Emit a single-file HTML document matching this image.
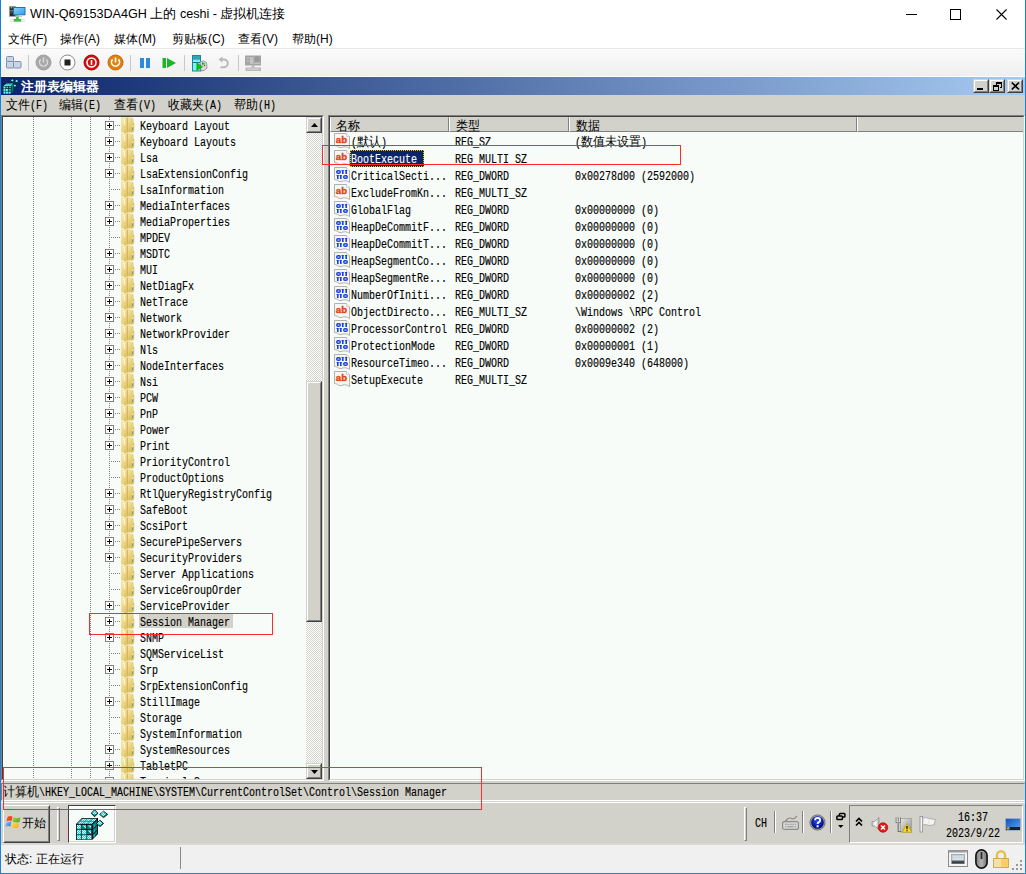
<!DOCTYPE html><html><head><meta charset="utf-8"><style>
*{margin:0;padding:0;box-sizing:border-box}
html,body{width:1026px;height:874px;overflow:hidden;background:#fff;font-family:"Liberation Sans",sans-serif;font-size:12px;color:#000}
.a{position:absolute}
.m{position:absolute;font-family:"Liberation Mono",monospace;font-size:12px;letter-spacing:0;transform:scaleX(0.8333);transform-origin:0 0;white-space:pre;line-height:16px;-webkit-text-stroke:0.15px currentColor}
.u{position:absolute;white-space:pre;line-height:16px}
.c{position:absolute;white-space:pre;line-height:16px;font-size:13px;transform:scaleX(0.923);transform-origin:0 0}
svg{position:absolute;overflow:visible}
.dv{position:absolute;width:1px;background-image:linear-gradient(#808080 50%,transparent 50%);background-size:1px 2px}
.dh{position:absolute;height:1px;background-image:linear-gradient(90deg,#808080 50%,transparent 50%);background-size:2px 1px}
.rb{position:absolute;border:1px solid;border-color:#d3d2ca #404040 #404040 #d3d2ca;background:#d3d2ca}
.rb>i{position:absolute;left:0;top:0;right:0;bottom:0;border:1px solid;border-color:#fff #808080 #808080 #fff}
.red{position:absolute;border:2px solid #ff2a2a}
</style></head><body>
<div class="a" style="left:0;top:0;width:1026px;height:48px;background:#fff"></div>
<div class="a" style="left:1px;top:48px;width:1024px;height:1px;background:#e8e8e8"></div>
<div class="a" style="left:1px;top:49px;width:1024px;height:27px;background:linear-gradient(#fbfbfb,#efefef)"></div>
<div class="a" style="left:1px;top:76px;width:1024px;height:1px;background:#fff"></div>
<svg style="left:6px;top:4px" width="22" height="22" viewBox="0 0 22 22">
<defs><linearGradient id="vm" x1="0" y1="0" x2="1" y2="1"><stop offset="0" stop-color="#90d0fa"/><stop offset="1" stop-color="#28a0f0"/></linearGradient></defs>
<rect x="3.3" y="2.3" width="6.4" height="10.2" fill="#2a2a2a" stroke="#b0b0b0" stroke-width="0.7"/><rect x="4.2" y="6.2" width="3" height="1" fill="#888"/><rect x="4.2" y="7.8" width="3" height="0.8" fill="#666"/>
<circle cx="5.5" cy="3.6" r="0.9" fill="#3e3"/>
<rect x="7.5" y="3.5" width="11.5" height="7.3" fill="url(#vm)" stroke="#2a6ea8" stroke-width="1"/>
<rect x="10" y="10.8" width="2.5" height="1.2" fill="#55cc55"/><rect x="9.5" y="12" width="6.5" height="0.7" fill="#a8b0c8"/>
<rect x="4" y="15" width="15" height="0.9" fill="#dcdcdc"/><rect x="4" y="16.8" width="15" height="0.9" fill="#dcdcdc"/>
<rect x="10" y="12.8" width="2.8" height="2.4" fill="#40c040"/><rect x="7.8" y="15" width="7.3" height="2.6" fill="#38c038"/>
</svg>
<div class="u" style="left:30px;top:6px;font-size:12.6px;line-height:16px;color:#000">WIN-Q69153DA4GH 上的 ceshi - 虚拟机连接</div>
<div class="a" style="left:906px;top:14px;width:11px;height:1px;background:#000"></div>
<div class="a" style="left:950px;top:9px;width:11px;height:11px;border:1px solid #000"></div>
<svg style="left:996px;top:9px" width="11" height="11" viewBox="0 0 11 11"><path d="M0.5 0.5L10.5 10.5M10.5 0.5L0.5 10.5" stroke="#000" stroke-width="1.1"/></svg>
<div class="u" style="left:8px;top:31px;font-size:12px">文件(F)</div>
<div class="u" style="left:60px;top:31px;font-size:12px">操作(A)</div>
<div class="u" style="left:114px;top:31px;font-size:12px">媒体(M)</div>
<div class="u" style="left:172px;top:31px;font-size:12px">剪贴板(C)</div>
<div class="u" style="left:238px;top:31px;font-size:12px">查看(V)</div>
<div class="u" style="left:292px;top:31px;font-size:12px">帮助(H)</div>
<svg style="left:6px;top:56px" width="16" height="13" viewBox="0 0 16 13">
<rect x="0.5" y="0.5" width="7" height="6" rx="1" fill="#c8d4e8" stroke="#8090a8"/>
<rect x="0.5" y="5.5" width="7" height="6.5" rx="1" fill="#c8d4e8" stroke="#8090a8"/>
<rect x="7.5" y="5.5" width="7.5" height="6.5" rx="1" fill="#c8d4e8" stroke="#8090a8"/></svg>
<div class="a" style="left:28px;top:55px;width:1px;height:16px;background:#c8c8c8"></div>
<div class="a" style="left:130px;top:55px;width:1px;height:16px;background:#c8c8c8"></div>
<div class="a" style="left:184px;top:55px;width:1px;height:16px;background:#c8c8c8"></div>
<div class="a" style="left:238px;top:55px;width:1px;height:16px;background:#c8c8c8"></div>
<svg style="left:34.5px;top:54px" width="17" height="17" viewBox="0 0 17 17">
<circle cx="8.5" cy="8.5" r="7.5" fill="#a8a8a8" stroke="#a0a0a0" stroke-width="1"/><path d="M5.6 5.4A4 4 0 1 0 11.4 5.4" fill="none" stroke="#ddd" stroke-width="1.4"/><path d="M8.5 3.5V8.5" stroke="#ddd" stroke-width="1.4"/></svg>
<svg style="left:59px;top:54px" width="17" height="17" viewBox="0 0 17 17">
<circle cx="8.5" cy="8.5" r="7.5" fill="#fff" stroke="#888" stroke-width="1"/><rect x="5.5" y="5.5" width="6" height="6" fill="#222"/></svg>
<svg style="left:82.5px;top:54px" width="17" height="17" viewBox="0 0 17 17">
<circle cx="8.5" cy="8.5" r="7.5" fill="#d40f0f" stroke="#a00" stroke-width="1"/><circle cx="8.5" cy="8.5" r="4.5" fill="none" stroke="#fff" stroke-width="1.6"/><path d="M8.5 6V11" stroke="#fff" stroke-width="1.6"/></svg>
<svg style="left:106.5px;top:54px" width="17" height="17" viewBox="0 0 17 17">
<circle cx="8.5" cy="8.5" r="7.5" fill="#e0810e" stroke="#c06a00" stroke-width="1"/><path d="M5.6 5.4A4 4 0 1 0 11.4 5.4" fill="none" stroke="#fff" stroke-width="1.6"/><path d="M8.5 3.5V8.5" stroke="#fff" stroke-width="1.6"/></svg>
<div class="a" style="left:140px;top:58px;width:4px;height:10px;background:#2a8be0"></div><div class="a" style="left:146px;top:58px;width:4px;height:10px;background:#2a8be0"></div>
<svg style="left:162px;top:57px" width="15" height="12" viewBox="0 0 15 12"><rect x="0.5" y="1" width="3.5" height="10" fill="#1cb52a"/><path d="M5 1L14 6L5 11Z" fill="#1cb52a"/></svg>
<svg style="left:192px;top:55px" width="16" height="17" viewBox="0 0 16 17">
<rect x="0.5" y="0.5" width="8" height="15.5" fill="#80eef8" stroke="#1a8898" stroke-width="1"/>
<rect x="1" y="1" width="7" height="2.5" fill="#28a8b8"/><rect x="1" y="3.5" width="7" height="1" fill="#1a7888"/><rect x="1" y="7" width="7" height="1" fill="#1a7888"/>
<path d="M8 7Q11 4.5 14.5 7.5L15 13Q13 16 9 16Z" fill="#d8d8e0" stroke="#888" stroke-width="0.8"/>
<path d="M10 7L13.5 9L10 10Z" fill="#20b020"/><circle cx="12.5" cy="10.5" r="0.7" fill="#d02020"/>
<path d="M4.8 8L10.5 11.8L4.8 15.5Z" fill="#10c010" stroke="#088808" stroke-width="0.5"/>
</svg>
<svg style="left:218px;top:56px" width="11" height="14" viewBox="0 0 11 14"><path d="M3 3.5H6A3.8 3.8 0 0 1 6 11.2H2.5" fill="none" stroke="#b8b8b8" stroke-width="2"/><path d="M0.5 3.5L4.5 0.5V6.5Z" fill="#b8b8b8"/></svg>
<svg style="left:245px;top:55px" width="16" height="16" viewBox="0 0 16 16">
<rect x="0" y="0.5" width="16" height="10" fill="#a4a4a4"/><rect x="1.5" y="2" width="3" height="2" fill="#b8b8b8"/><rect x="1.5" y="5" width="3" height="2" fill="#b8b8b8"/>
<rect x="5" y="2" width="3.5" height="7" fill="#c4c4c4"/><path d="M10 2H11.5V1H13V2H14.5V7H10Z" fill="#999"/><rect x="9.5" y="7.5" width="5.5" height="1.5" fill="#c0c0c0"/>
<rect x="6.5" y="10.5" width="3" height="2" fill="#b4b4b4"/><rect x="0.5" y="12.5" width="15.5" height="3.5" fill="#b8b8b8"/><rect x="2" y="13.5" width="12" height="1.5" fill="#cfcfcf"/>
</svg>
<div class="a" style="left:1px;top:77px;width:1024px;height:768px;background:#d3d2ca"></div>
<div class="a" style="left:1px;top:77px;width:1024px;height:18px;background:linear-gradient(90deg,#0a246a,#a6caf0)"></div>
<svg style="left:3px;top:78px" width="16" height="16" viewBox="0 0 32 32"><use href="#reg"/></svg>
<div class="u" style="left:21px;top:78px;color:#fff;font-weight:bold;font-size:13px;line-height:17px">注册表编辑器</div>
<div class="rb" style="left:973px;top:79px;width:16px;height:14px"><i></i><div class="a" style="left:3px;top:8px;width:6px;height:2px;background:#000"></div></div>
<div class="rb" style="left:989px;top:79px;width:16px;height:14px"><i></i><svg style="left:1px;top:1px" width="12" height="12" viewBox="0 0 12 12"><g fill="#000"><rect x="5" y="1" width="6" height="2"/><rect x="10" y="1" width="1" height="6"/><rect x="5" y="1" width="1" height="3"/><rect x="9" y="6" width="2" height="1"/><rect x="2" y="4" width="6" height="2"/><rect x="2" y="4" width="1" height="6"/><rect x="7" y="4" width="1" height="6"/><rect x="2" y="9" width="6" height="1"/></g></svg></div>
<div class="rb" style="left:1007px;top:79px;width:16px;height:14px"><i></i><svg style="left:3px;top:2px" width="9" height="8" viewBox="0 0 9 8"><path d="M0.8 0.5L8 7.5M8 0.5L0.8 7.5" stroke="#000" stroke-width="1.7"/></svg></div>
<div class="c" style="left:6px;top:97px;">文件</div><div class="m" style="left:30px;top:98px;">(F)</div>
<div class="c" style="left:59px;top:97px;">编辑</div><div class="m" style="left:83px;top:98px;">(E)</div>
<div class="c" style="left:114px;top:97px;">查看</div><div class="m" style="left:138px;top:98px;">(V)</div>
<div class="c" style="left:168px;top:97px;">收藏夹</div><div class="m" style="left:204px;top:98px;">(A)</div>
<div class="c" style="left:234px;top:97px;">帮助</div><div class="m" style="left:258px;top:98px;">(H)</div>
<div class="a" style="left:1px;top:115px;width:323px;height:666px;border:1px solid;border-color:#808080 #fff #fff #808080"></div>
<div class="a" style="left:2px;top:116px;width:321px;height:664px;border:1px solid;border-color:#404040 #d3d2ca #d3d2ca #404040;background:#f8fcf8;box-shadow:inset 1px 1px 0 #fff"></div>
<div class="a" style="left:4px;top:117px;width:302px;height:662px;overflow:hidden">
<div class="dv" style="left:29px;top:0;height:662px"></div>
<div class="dv" style="left:67px;top:0;height:662px"></div>
<div class="dv" style="left:86px;top:0;height:662px"></div>
<div class="dv" style="left:105px;top:0;height:662px"></div>
<div class="dh" style="left:107px;top:8px;width:9px"></div>
<div class="a" style="left:101px;top:4px;width:9px;height:9px;border:1px solid #808080;background:#fff"></div>
<div class="a" style="left:103px;top:8px;width:5px;height:1px;background:#000"></div>
<div class="a" style="left:105px;top:6px;width:1px;height:5px;background:#000"></div>
<svg style="left:116px;top:0px" width="16" height="16"><use href="#fold"/></svg>
<div class="m" style="left:136px;top:2px">Keyboard Layout</div>
<div class="dh" style="left:107px;top:24px;width:9px"></div>
<div class="a" style="left:101px;top:20px;width:9px;height:9px;border:1px solid #808080;background:#fff"></div>
<div class="a" style="left:103px;top:24px;width:5px;height:1px;background:#000"></div>
<div class="a" style="left:105px;top:22px;width:1px;height:5px;background:#000"></div>
<svg style="left:116px;top:16px" width="16" height="16"><use href="#fold"/></svg>
<div class="m" style="left:136px;top:18px">Keyboard Layouts</div>
<div class="dh" style="left:107px;top:40px;width:9px"></div>
<div class="a" style="left:101px;top:36px;width:9px;height:9px;border:1px solid #808080;background:#fff"></div>
<div class="a" style="left:103px;top:40px;width:5px;height:1px;background:#000"></div>
<div class="a" style="left:105px;top:38px;width:1px;height:5px;background:#000"></div>
<svg style="left:116px;top:32px" width="16" height="16"><use href="#fold"/></svg>
<div class="m" style="left:136px;top:34px">Lsa</div>
<div class="dh" style="left:107px;top:56px;width:9px"></div>
<div class="a" style="left:101px;top:52px;width:9px;height:9px;border:1px solid #808080;background:#fff"></div>
<div class="a" style="left:103px;top:56px;width:5px;height:1px;background:#000"></div>
<div class="a" style="left:105px;top:54px;width:1px;height:5px;background:#000"></div>
<svg style="left:116px;top:48px" width="16" height="16"><use href="#fold"/></svg>
<div class="m" style="left:136px;top:50px">LsaExtensionConfig</div>
<div class="dh" style="left:107px;top:72px;width:9px"></div>
<svg style="left:116px;top:64px" width="16" height="16"><use href="#fold"/></svg>
<div class="m" style="left:136px;top:66px">LsaInformation</div>
<div class="dh" style="left:107px;top:88px;width:9px"></div>
<div class="a" style="left:101px;top:84px;width:9px;height:9px;border:1px solid #808080;background:#fff"></div>
<div class="a" style="left:103px;top:88px;width:5px;height:1px;background:#000"></div>
<div class="a" style="left:105px;top:86px;width:1px;height:5px;background:#000"></div>
<svg style="left:116px;top:80px" width="16" height="16"><use href="#fold"/></svg>
<div class="m" style="left:136px;top:82px">MediaInterfaces</div>
<div class="dh" style="left:107px;top:104px;width:9px"></div>
<div class="a" style="left:101px;top:100px;width:9px;height:9px;border:1px solid #808080;background:#fff"></div>
<div class="a" style="left:103px;top:104px;width:5px;height:1px;background:#000"></div>
<div class="a" style="left:105px;top:102px;width:1px;height:5px;background:#000"></div>
<svg style="left:116px;top:96px" width="16" height="16"><use href="#fold"/></svg>
<div class="m" style="left:136px;top:98px">MediaProperties</div>
<div class="dh" style="left:107px;top:120px;width:9px"></div>
<svg style="left:116px;top:112px" width="16" height="16"><use href="#fold"/></svg>
<div class="m" style="left:136px;top:114px">MPDEV</div>
<div class="dh" style="left:107px;top:136px;width:9px"></div>
<div class="a" style="left:101px;top:132px;width:9px;height:9px;border:1px solid #808080;background:#fff"></div>
<div class="a" style="left:103px;top:136px;width:5px;height:1px;background:#000"></div>
<div class="a" style="left:105px;top:134px;width:1px;height:5px;background:#000"></div>
<svg style="left:116px;top:128px" width="16" height="16"><use href="#fold"/></svg>
<div class="m" style="left:136px;top:130px">MSDTC</div>
<div class="dh" style="left:107px;top:152px;width:9px"></div>
<div class="a" style="left:101px;top:148px;width:9px;height:9px;border:1px solid #808080;background:#fff"></div>
<div class="a" style="left:103px;top:152px;width:5px;height:1px;background:#000"></div>
<div class="a" style="left:105px;top:150px;width:1px;height:5px;background:#000"></div>
<svg style="left:116px;top:144px" width="16" height="16"><use href="#fold"/></svg>
<div class="m" style="left:136px;top:146px">MUI</div>
<div class="dh" style="left:107px;top:168px;width:9px"></div>
<div class="a" style="left:101px;top:164px;width:9px;height:9px;border:1px solid #808080;background:#fff"></div>
<div class="a" style="left:103px;top:168px;width:5px;height:1px;background:#000"></div>
<div class="a" style="left:105px;top:166px;width:1px;height:5px;background:#000"></div>
<svg style="left:116px;top:160px" width="16" height="16"><use href="#fold"/></svg>
<div class="m" style="left:136px;top:162px">NetDiagFx</div>
<div class="dh" style="left:107px;top:184px;width:9px"></div>
<div class="a" style="left:101px;top:180px;width:9px;height:9px;border:1px solid #808080;background:#fff"></div>
<div class="a" style="left:103px;top:184px;width:5px;height:1px;background:#000"></div>
<div class="a" style="left:105px;top:182px;width:1px;height:5px;background:#000"></div>
<svg style="left:116px;top:176px" width="16" height="16"><use href="#fold"/></svg>
<div class="m" style="left:136px;top:178px">NetTrace</div>
<div class="dh" style="left:107px;top:200px;width:9px"></div>
<div class="a" style="left:101px;top:196px;width:9px;height:9px;border:1px solid #808080;background:#fff"></div>
<div class="a" style="left:103px;top:200px;width:5px;height:1px;background:#000"></div>
<div class="a" style="left:105px;top:198px;width:1px;height:5px;background:#000"></div>
<svg style="left:116px;top:192px" width="16" height="16"><use href="#fold"/></svg>
<div class="m" style="left:136px;top:194px">Network</div>
<div class="dh" style="left:107px;top:216px;width:9px"></div>
<div class="a" style="left:101px;top:212px;width:9px;height:9px;border:1px solid #808080;background:#fff"></div>
<div class="a" style="left:103px;top:216px;width:5px;height:1px;background:#000"></div>
<div class="a" style="left:105px;top:214px;width:1px;height:5px;background:#000"></div>
<svg style="left:116px;top:208px" width="16" height="16"><use href="#fold"/></svg>
<div class="m" style="left:136px;top:210px">NetworkProvider</div>
<div class="dh" style="left:107px;top:232px;width:9px"></div>
<div class="a" style="left:101px;top:228px;width:9px;height:9px;border:1px solid #808080;background:#fff"></div>
<div class="a" style="left:103px;top:232px;width:5px;height:1px;background:#000"></div>
<div class="a" style="left:105px;top:230px;width:1px;height:5px;background:#000"></div>
<svg style="left:116px;top:224px" width="16" height="16"><use href="#fold"/></svg>
<div class="m" style="left:136px;top:226px">Nls</div>
<div class="dh" style="left:107px;top:248px;width:9px"></div>
<div class="a" style="left:101px;top:244px;width:9px;height:9px;border:1px solid #808080;background:#fff"></div>
<div class="a" style="left:103px;top:248px;width:5px;height:1px;background:#000"></div>
<div class="a" style="left:105px;top:246px;width:1px;height:5px;background:#000"></div>
<svg style="left:116px;top:240px" width="16" height="16"><use href="#fold"/></svg>
<div class="m" style="left:136px;top:242px">NodeInterfaces</div>
<div class="dh" style="left:107px;top:264px;width:9px"></div>
<div class="a" style="left:101px;top:260px;width:9px;height:9px;border:1px solid #808080;background:#fff"></div>
<div class="a" style="left:103px;top:264px;width:5px;height:1px;background:#000"></div>
<div class="a" style="left:105px;top:262px;width:1px;height:5px;background:#000"></div>
<svg style="left:116px;top:256px" width="16" height="16"><use href="#fold"/></svg>
<div class="m" style="left:136px;top:258px">Nsi</div>
<div class="dh" style="left:107px;top:280px;width:9px"></div>
<div class="a" style="left:101px;top:276px;width:9px;height:9px;border:1px solid #808080;background:#fff"></div>
<div class="a" style="left:103px;top:280px;width:5px;height:1px;background:#000"></div>
<div class="a" style="left:105px;top:278px;width:1px;height:5px;background:#000"></div>
<svg style="left:116px;top:272px" width="16" height="16"><use href="#fold"/></svg>
<div class="m" style="left:136px;top:274px">PCW</div>
<div class="dh" style="left:107px;top:296px;width:9px"></div>
<div class="a" style="left:101px;top:292px;width:9px;height:9px;border:1px solid #808080;background:#fff"></div>
<div class="a" style="left:103px;top:296px;width:5px;height:1px;background:#000"></div>
<div class="a" style="left:105px;top:294px;width:1px;height:5px;background:#000"></div>
<svg style="left:116px;top:288px" width="16" height="16"><use href="#fold"/></svg>
<div class="m" style="left:136px;top:290px">PnP</div>
<div class="dh" style="left:107px;top:312px;width:9px"></div>
<div class="a" style="left:101px;top:308px;width:9px;height:9px;border:1px solid #808080;background:#fff"></div>
<div class="a" style="left:103px;top:312px;width:5px;height:1px;background:#000"></div>
<div class="a" style="left:105px;top:310px;width:1px;height:5px;background:#000"></div>
<svg style="left:116px;top:304px" width="16" height="16"><use href="#fold"/></svg>
<div class="m" style="left:136px;top:306px">Power</div>
<div class="dh" style="left:107px;top:328px;width:9px"></div>
<div class="a" style="left:101px;top:324px;width:9px;height:9px;border:1px solid #808080;background:#fff"></div>
<div class="a" style="left:103px;top:328px;width:5px;height:1px;background:#000"></div>
<div class="a" style="left:105px;top:326px;width:1px;height:5px;background:#000"></div>
<svg style="left:116px;top:320px" width="16" height="16"><use href="#fold"/></svg>
<div class="m" style="left:136px;top:322px">Print</div>
<div class="dh" style="left:107px;top:344px;width:9px"></div>
<svg style="left:116px;top:336px" width="16" height="16"><use href="#fold"/></svg>
<div class="m" style="left:136px;top:338px">PriorityControl</div>
<div class="dh" style="left:107px;top:360px;width:9px"></div>
<svg style="left:116px;top:352px" width="16" height="16"><use href="#fold"/></svg>
<div class="m" style="left:136px;top:354px">ProductOptions</div>
<div class="dh" style="left:107px;top:376px;width:9px"></div>
<div class="a" style="left:101px;top:372px;width:9px;height:9px;border:1px solid #808080;background:#fff"></div>
<div class="a" style="left:103px;top:376px;width:5px;height:1px;background:#000"></div>
<div class="a" style="left:105px;top:374px;width:1px;height:5px;background:#000"></div>
<svg style="left:116px;top:368px" width="16" height="16"><use href="#fold"/></svg>
<div class="m" style="left:136px;top:370px">RtlQueryRegistryConfig</div>
<div class="dh" style="left:107px;top:392px;width:9px"></div>
<div class="a" style="left:101px;top:388px;width:9px;height:9px;border:1px solid #808080;background:#fff"></div>
<div class="a" style="left:103px;top:392px;width:5px;height:1px;background:#000"></div>
<div class="a" style="left:105px;top:390px;width:1px;height:5px;background:#000"></div>
<svg style="left:116px;top:384px" width="16" height="16"><use href="#fold"/></svg>
<div class="m" style="left:136px;top:386px">SafeBoot</div>
<div class="dh" style="left:107px;top:408px;width:9px"></div>
<div class="a" style="left:101px;top:404px;width:9px;height:9px;border:1px solid #808080;background:#fff"></div>
<div class="a" style="left:103px;top:408px;width:5px;height:1px;background:#000"></div>
<div class="a" style="left:105px;top:406px;width:1px;height:5px;background:#000"></div>
<svg style="left:116px;top:400px" width="16" height="16"><use href="#fold"/></svg>
<div class="m" style="left:136px;top:402px">ScsiPort</div>
<div class="dh" style="left:107px;top:424px;width:9px"></div>
<div class="a" style="left:101px;top:420px;width:9px;height:9px;border:1px solid #808080;background:#fff"></div>
<div class="a" style="left:103px;top:424px;width:5px;height:1px;background:#000"></div>
<div class="a" style="left:105px;top:422px;width:1px;height:5px;background:#000"></div>
<svg style="left:116px;top:416px" width="16" height="16"><use href="#fold"/></svg>
<div class="m" style="left:136px;top:418px">SecurePipeServers</div>
<div class="dh" style="left:107px;top:440px;width:9px"></div>
<div class="a" style="left:101px;top:436px;width:9px;height:9px;border:1px solid #808080;background:#fff"></div>
<div class="a" style="left:103px;top:440px;width:5px;height:1px;background:#000"></div>
<div class="a" style="left:105px;top:438px;width:1px;height:5px;background:#000"></div>
<svg style="left:116px;top:432px" width="16" height="16"><use href="#fold"/></svg>
<div class="m" style="left:136px;top:434px">SecurityProviders</div>
<div class="dh" style="left:107px;top:456px;width:9px"></div>
<svg style="left:116px;top:448px" width="16" height="16"><use href="#fold"/></svg>
<div class="m" style="left:136px;top:450px">Server Applications</div>
<div class="dh" style="left:107px;top:472px;width:9px"></div>
<svg style="left:116px;top:464px" width="16" height="16"><use href="#fold"/></svg>
<div class="m" style="left:136px;top:466px">ServiceGroupOrder</div>
<div class="dh" style="left:107px;top:488px;width:9px"></div>
<div class="a" style="left:101px;top:484px;width:9px;height:9px;border:1px solid #808080;background:#fff"></div>
<div class="a" style="left:103px;top:488px;width:5px;height:1px;background:#000"></div>
<div class="a" style="left:105px;top:486px;width:1px;height:5px;background:#000"></div>
<svg style="left:116px;top:480px" width="16" height="16"><use href="#fold"/></svg>
<div class="m" style="left:136px;top:482px">ServiceProvider</div>
<div class="dh" style="left:107px;top:504px;width:9px"></div>
<div class="a" style="left:101px;top:500px;width:9px;height:9px;border:1px solid #808080;background:#fff"></div>
<div class="a" style="left:103px;top:504px;width:5px;height:1px;background:#000"></div>
<div class="a" style="left:105px;top:502px;width:1px;height:5px;background:#000"></div>
<svg style="left:116px;top:496px" width="16" height="16"><use href="#fold"/></svg>
<div class="a" style="left:135px;top:497px;width:94px;height:14px;background:#d3d2ca"></div>
<div class="m" style="left:136px;top:498px">Session Manager</div>
<div class="dh" style="left:107px;top:520px;width:9px"></div>
<div class="a" style="left:101px;top:516px;width:9px;height:9px;border:1px solid #808080;background:#fff"></div>
<div class="a" style="left:103px;top:520px;width:5px;height:1px;background:#000"></div>
<div class="a" style="left:105px;top:518px;width:1px;height:5px;background:#000"></div>
<svg style="left:116px;top:512px" width="16" height="16"><use href="#fold"/></svg>
<div class="m" style="left:136px;top:514px">SNMP</div>
<div class="dh" style="left:107px;top:536px;width:9px"></div>
<svg style="left:116px;top:528px" width="16" height="16"><use href="#fold"/></svg>
<div class="m" style="left:136px;top:530px">SQMServiceList</div>
<div class="dh" style="left:107px;top:552px;width:9px"></div>
<div class="a" style="left:101px;top:548px;width:9px;height:9px;border:1px solid #808080;background:#fff"></div>
<div class="a" style="left:103px;top:552px;width:5px;height:1px;background:#000"></div>
<div class="a" style="left:105px;top:550px;width:1px;height:5px;background:#000"></div>
<svg style="left:116px;top:544px" width="16" height="16"><use href="#fold"/></svg>
<div class="m" style="left:136px;top:546px">Srp</div>
<div class="dh" style="left:107px;top:568px;width:9px"></div>
<svg style="left:116px;top:560px" width="16" height="16"><use href="#fold"/></svg>
<div class="m" style="left:136px;top:562px">SrpExtensionConfig</div>
<div class="dh" style="left:107px;top:584px;width:9px"></div>
<div class="a" style="left:101px;top:580px;width:9px;height:9px;border:1px solid #808080;background:#fff"></div>
<div class="a" style="left:103px;top:584px;width:5px;height:1px;background:#000"></div>
<div class="a" style="left:105px;top:582px;width:1px;height:5px;background:#000"></div>
<svg style="left:116px;top:576px" width="16" height="16"><use href="#fold"/></svg>
<div class="m" style="left:136px;top:578px">StillImage</div>
<div class="dh" style="left:107px;top:600px;width:9px"></div>
<svg style="left:116px;top:592px" width="16" height="16"><use href="#fold"/></svg>
<div class="m" style="left:136px;top:594px">Storage</div>
<div class="dh" style="left:107px;top:616px;width:9px"></div>
<svg style="left:116px;top:608px" width="16" height="16"><use href="#fold"/></svg>
<div class="m" style="left:136px;top:610px">SystemInformation</div>
<div class="dh" style="left:107px;top:632px;width:9px"></div>
<div class="a" style="left:101px;top:628px;width:9px;height:9px;border:1px solid #808080;background:#fff"></div>
<div class="a" style="left:103px;top:632px;width:5px;height:1px;background:#000"></div>
<div class="a" style="left:105px;top:630px;width:1px;height:5px;background:#000"></div>
<svg style="left:116px;top:624px" width="16" height="16"><use href="#fold"/></svg>
<div class="m" style="left:136px;top:626px">SystemResources</div>
<div class="dh" style="left:107px;top:648px;width:9px"></div>
<div class="a" style="left:101px;top:644px;width:9px;height:9px;border:1px solid #808080;background:#fff"></div>
<div class="a" style="left:103px;top:648px;width:5px;height:1px;background:#000"></div>
<div class="a" style="left:105px;top:646px;width:1px;height:5px;background:#000"></div>
<svg style="left:116px;top:640px" width="16" height="16"><use href="#fold"/></svg>
<div class="m" style="left:136px;top:642px">TabletPC</div>
<div class="dh" style="left:107px;top:664px;width:9px"></div>
<div class="a" style="left:101px;top:660px;width:9px;height:9px;border:1px solid #808080;background:#fff"></div>
<div class="a" style="left:103px;top:664px;width:5px;height:1px;background:#000"></div>
<div class="a" style="left:105px;top:662px;width:1px;height:5px;background:#000"></div>
<svg style="left:116px;top:656px" width="16" height="16"><use href="#fold"/></svg>
<div class="m" style="left:136px;top:658px">Terminal Server</div>
</div>
<div class="a" style="left:306px;top:117px;width:16px;height:662px;background-color:#eceae6;background-image:repeating-conic-gradient(#d3d2ca 0 25%,#fff 0 50%);background-size:2px 2px"></div>
<div class="rb" style="left:306px;top:117px;width:16px;height:16px"><i></i><svg style="left:4px;top:5px" width="7" height="4"><path d="M3.5 0L7 4H0Z" fill="#000"/></svg></div>
<div class="rb" style="left:306px;top:763px;width:16px;height:16px"><i></i><svg style="left:4px;top:6px" width="7" height="4"><path d="M0 0H7L3.5 4Z" fill="#000"/></svg></div>
<div class="rb" style="left:306px;top:381px;width:16px;height:241px"><i></i></div>
<div class="a" style="left:328px;top:115px;width:697px;height:666px;border:1px solid;border-color:#808080 #fff #fff #808080"></div>
<div class="a" style="left:329px;top:116px;width:695px;height:664px;border:1px solid;border-color:#404040 #d3d2ca #d3d2ca #404040;background:#f8fcf8;box-shadow:inset 1px 1px 0 #fff"></div>
<div class="a" style="left:330px;top:117px;width:119px;height:15px;border:1px solid;border-color:#d3d2ca #808080 #808080 #fff;background:#d3d2ca"></div><div class="c" style="left:336px;top:118px;">名称</div>
<div class="a" style="left:449px;top:117px;width:120px;height:15px;border:1px solid;border-color:#d3d2ca #808080 #808080 #fff;background:#d3d2ca"></div><div class="c" style="left:456px;top:118px;">类型</div>
<div class="a" style="left:569px;top:117px;width:288px;height:15px;border:1px solid;border-color:#d3d2ca #808080 #808080 #fff;background:#d3d2ca"></div><div class="c" style="left:576px;top:118px;">数据</div>
<div class="a" style="left:857px;top:117px;width:166px;height:15px;border-bottom:1px solid #808080;border-left:1px solid #fff;background:#d3d2ca"></div>
<svg style="left:334px;top:132px" width="16" height="17"><use href="#ab"/></svg>
<div class="m" style="left:351px;top:135px;">(</div><div class="c" style="left:357px;top:134px;">默认</div><div class="m" style="left:381px;top:135px;">)</div>
<div class="m" style="left:455px;top:135px">REG_SZ</div>
<div class="m" style="left:575px;top:135px;">(</div><div class="c" style="left:581px;top:134px;">数值未设置</div><div class="m" style="left:641px;top:135px;">)</div>
<svg style="left:334px;top:149px" width="16" height="17"><use href="#ab"/></svg>
<div class="a" style="left:350px;top:150px;width:74px;height:17px;background:#0a246a;outline:1px dotted #e0c040;outline-offset:-1px"></div>
<div class="m" style="left:351px;top:152px;color:#fff">BootExecute</div>
<div class="m" style="left:455px;top:152px">REG_MULTI_SZ</div>
<svg style="left:334px;top:166px" width="16" height="17"><use href="#bin"/></svg>
<div class="m" style="left:351px;top:169px">CriticalSecti...</div>
<div class="m" style="left:455px;top:169px">REG_DWORD</div>
<div class="m" style="left:575px;top:169px">0x00278d00 (2592000)</div>
<svg style="left:334px;top:183px" width="16" height="17"><use href="#ab"/></svg>
<div class="m" style="left:351px;top:186px">ExcludeFromKn...</div>
<div class="m" style="left:455px;top:186px">REG_MULTI_SZ</div>
<svg style="left:334px;top:200px" width="16" height="17"><use href="#bin"/></svg>
<div class="m" style="left:351px;top:203px">GlobalFlag</div>
<div class="m" style="left:455px;top:203px">REG_DWORD</div>
<div class="m" style="left:575px;top:203px">0x00000000 (0)</div>
<svg style="left:334px;top:217px" width="16" height="17"><use href="#bin"/></svg>
<div class="m" style="left:351px;top:220px">HeapDeCommitF...</div>
<div class="m" style="left:455px;top:220px">REG_DWORD</div>
<div class="m" style="left:575px;top:220px">0x00000000 (0)</div>
<svg style="left:334px;top:234px" width="16" height="17"><use href="#bin"/></svg>
<div class="m" style="left:351px;top:237px">HeapDeCommitT...</div>
<div class="m" style="left:455px;top:237px">REG_DWORD</div>
<div class="m" style="left:575px;top:237px">0x00000000 (0)</div>
<svg style="left:334px;top:251px" width="16" height="17"><use href="#bin"/></svg>
<div class="m" style="left:351px;top:254px">HeapSegmentCo...</div>
<div class="m" style="left:455px;top:254px">REG_DWORD</div>
<div class="m" style="left:575px;top:254px">0x00000000 (0)</div>
<svg style="left:334px;top:268px" width="16" height="17"><use href="#bin"/></svg>
<div class="m" style="left:351px;top:271px">HeapSegmentRe...</div>
<div class="m" style="left:455px;top:271px">REG_DWORD</div>
<div class="m" style="left:575px;top:271px">0x00000000 (0)</div>
<svg style="left:334px;top:285px" width="16" height="17"><use href="#bin"/></svg>
<div class="m" style="left:351px;top:288px">NumberOfIniti...</div>
<div class="m" style="left:455px;top:288px">REG_DWORD</div>
<div class="m" style="left:575px;top:288px">0x00000002 (2)</div>
<svg style="left:334px;top:302px" width="16" height="17"><use href="#ab"/></svg>
<div class="m" style="left:351px;top:305px">ObjectDirecto...</div>
<div class="m" style="left:455px;top:305px">REG_MULTI_SZ</div>
<div class="m" style="left:575px;top:305px">\Windows \RPC Control</div>
<svg style="left:334px;top:319px" width="16" height="17"><use href="#bin"/></svg>
<div class="m" style="left:351px;top:322px">ProcessorControl</div>
<div class="m" style="left:455px;top:322px">REG_DWORD</div>
<div class="m" style="left:575px;top:322px">0x00000002 (2)</div>
<svg style="left:334px;top:336px" width="16" height="17"><use href="#bin"/></svg>
<div class="m" style="left:351px;top:339px">ProtectionMode</div>
<div class="m" style="left:455px;top:339px">REG_DWORD</div>
<div class="m" style="left:575px;top:339px">0x00000001 (1)</div>
<svg style="left:334px;top:353px" width="16" height="17"><use href="#bin"/></svg>
<div class="m" style="left:351px;top:356px">ResourceTimeo...</div>
<div class="m" style="left:455px;top:356px">REG_DWORD</div>
<div class="m" style="left:575px;top:356px">0x0009e340 (648000)</div>
<svg style="left:334px;top:370px" width="16" height="17"><use href="#ab"/></svg>
<div class="m" style="left:351px;top:373px">SetupExecute</div>
<div class="m" style="left:455px;top:373px">REG_MULTI_SZ</div>
<div class="a" style="left:1px;top:783px;width:1024px;height:18px;border:1px solid;border-color:#808080 #d3d2ca #fff #808080"></div>
<div class="c" style="left:3px;top:784px;">计算机</div><div class="m" style="left:39px;top:785px;">\HKEY_LOCAL_MACHINE\SYSTEM\CurrentControlSet\Control\Session Manager</div>
<div class="a" style="left:1px;top:802px;width:1024px;height:1px;background:#fff"></div>
<div class="a" style="left:3px;top:805px;width:47px;height:38px;border:1px solid;border-color:#fff #404040 #404040 #fff;background:#d3d2ca"><i class="a" style="left:0;top:0;right:0;bottom:0;border:1px solid;border-color:#d3d2ca #808080 #808080 #d3d2ca"></i></div>
<svg style="left:5px;top:815px" width="16" height="15" viewBox="0 0 16 15">
<defs><linearGradient id="wr" x1="0" y1="0" x2="1" y2="1"><stop offset="0" stop-color="#f86020"/><stop offset="1" stop-color="#e83018"/></linearGradient>
<linearGradient id="wg" x1="0" y1="0" x2="1" y2="1"><stop offset="0" stop-color="#a8d848"/><stop offset="1" stop-color="#50a020"/></linearGradient>
<linearGradient id="wb" x1="0" y1="0" x2="1" y2="1"><stop offset="0" stop-color="#a0d0f8"/><stop offset="1" stop-color="#2070c8"/></linearGradient>
<linearGradient id="wy" x1="0" y1="0" x2="1" y2="1"><stop offset="0" stop-color="#ffe060"/><stop offset="1" stop-color="#f8a810"/></linearGradient></defs>
<path d="M2.5 2Q4.5 0.3 7.5 1.5L6.5 6Q4 5 1.5 6.5Z" fill="url(#wr)"/>
<path d="M8.3 2Q11 3.5 15.5 2.5L14.5 7Q11.5 8 7.5 6.5Z" fill="url(#wg)"/>
<path d="M1.3 7.5Q3.5 6 6.3 7L5.3 11.5Q2.5 10.5 0.3 12Z" fill="url(#wb)"/>
<path d="M7.2 7.3Q10.5 8.8 14.3 8L13.3 12.5Q10 14 6.2 12Z" fill="url(#wy)"/></svg>
<div class="u" style="left:22px;top:815px;font-size:12px;line-height:16px">开始</div>
<div class="a" style="left:57px;top:807px;width:3px;height:34px;border:1px solid;border-color:#fff #808080 #808080 #fff"></div>
<div class="a" style="left:68px;top:805px;width:48px;height:38px;border:1px solid;border-color:#404040 #fff #fff #404040;background:#f8fcf8"><i class="a" style="left:0;top:0;right:0;bottom:0;border:1px solid;border-color:#fff #d3d2ca #d3d2ca #fff"></i></div>
<svg style="left:76px;top:808px" width="32" height="32" viewBox="0 0 32 32"><use href="#reg"/></svg>
<div class="a" style="left:744px;top:807px;width:3px;height:34px;border:1px solid;border-color:#fff #808080 #808080 #fff"></div>
<div class="m" style="left:755px;top:816px">CH</div>
<div class="a" style="left:774px;top:811px;width:2px;height:22px;border-left:1px solid #808080;border-right:1px solid #fff"></div>
<div class="a" style="left:802px;top:811px;width:2px;height:22px;border-left:1px solid #808080;border-right:1px solid #fff"></div>
<div class="a" style="left:830px;top:811px;width:2px;height:22px;border-left:1px solid #808080;border-right:1px solid #fff"></div>
<svg style="left:782px;top:815px" width="17" height="15" viewBox="0 0 17 15">
<path d="M3 6.5L6 3.5Q8 2.5 9.5 3.5Q11 4.5 13 3L15 1" fill="none" stroke="#8c8c8c" stroke-width="1.2"/>
<rect x="0.6" y="6.6" width="15.8" height="7.8" rx="2" fill="#d8d8d8" stroke="#8c8c8c" stroke-width="1.2"/>
<path d="M3 9.3h11" stroke="#8c8c8c" stroke-width="1.1" stroke-dasharray="1.6 0.9"/><path d="M3 11.8h1.5M5.5 11.8h6M12.5 11.8h1.5" stroke="#8c8c8c" stroke-width="1.1"/></svg>
<svg style="left:809px;top:814px" width="17" height="17" viewBox="0 0 17 17">
<defs><radialGradient id="hq" cx="0.5" cy="0.4" r="0.6"><stop offset="0" stop-color="#3050f0"/><stop offset="0.7" stop-color="#0818a8"/><stop offset="1" stop-color="#000858"/></radialGradient></defs>
<circle cx="8.5" cy="8.5" r="7.6" fill="#a0a0a0" stroke="#606060" stroke-width="0.8"/><circle cx="8.5" cy="8.5" r="6.3" fill="url(#hq)"/>
<path d="M6 6.3Q6 3.8 8.6 3.8Q11.2 3.8 11.2 6.2Q11.2 7.6 9.5 8.4Q8.6 8.9 8.6 10" fill="none" stroke="#fff" stroke-width="1.8"/><rect x="7.6" y="11.3" width="2" height="2" fill="#fff"/></svg>
<svg style="left:836px;top:812px" width="10" height="18" viewBox="0 0 10 18">
<rect x="3.4" y="1.4" width="5.5" height="3.6" rx="0.8" fill="none" stroke="#000" stroke-width="1.5"/><rect x="0.9" y="3.9" width="5.5" height="3.6" rx="0.8" fill="#d3d2ca" stroke="#000" stroke-width="1.5"/>
<path d="M2 13H7.5L4.75 16Z" fill="#000"/></svg>
<div class="a" style="left:849px;top:805px;width:174px;height:38px;border:1px solid;border-color:#808080 #fff #fff #808080"></div>
<svg style="left:855px;top:817px" width="8" height="10" viewBox="0 0 8 10"><path d="M1 4.5L4 1.5L7 4.5M1 8.5L4 5.5L7 8.5" fill="none" stroke="#000" stroke-width="1.7"/></svg>
<svg style="left:871px;top:817px" width="18" height="16" viewBox="0 0 18 16">
<defs><linearGradient id="sp" x1="0" x2="1"><stop offset="0" stop-color="#c8c8c8"/><stop offset="0.5" stop-color="#fafafa"/><stop offset="1" stop-color="#b0b0b0"/></linearGradient></defs>
<path d="M1 4.5H3.5L8 0.5V12.5L3.5 9H1Z" fill="url(#sp)" stroke="#909090" stroke-width="0.8"/>
<circle cx="12" cy="10.5" r="4.8" fill="#e01818" stroke="#b00000" stroke-width="0.6"/><path d="M10 8.5L14 12.5M14 8.5L10 12.5" stroke="#fff" stroke-width="1.6"/></svg>
<svg style="left:895px;top:817px" width="17" height="16" viewBox="0 0 17 16">
<defs><linearGradient id="nb" x1="0" y1="0" x2="1" y2="1"><stop offset="0" stop-color="#e8e8e8"/><stop offset="1" stop-color="#909090"/></linearGradient></defs>
<rect x="5.5" y="1.5" width="11" height="13.5" fill="url(#nb)" stroke="#a0a0a0" stroke-width="0.8"/>
<path d="M1.2 0.5V5.5H5.2V0.5M3.2 0.5V5.5M3.2 5.5V14.5H6" fill="none" stroke="#707070" stroke-width="1.1"/><path d="M2 1V5H4.4V1" fill="none" stroke="#fff" stroke-width="0.6"/>
<path d="M12 6.5L16.8 15.3H7.2Z" fill="#f8d820" stroke="#c09000" stroke-width="0.6"/><path d="M12 9V12.3M12 13.2V14.3" stroke="#000" stroke-width="1.2"/></svg>
<svg style="left:919px;top:816px" width="17" height="17" viewBox="0 0 17 17">
<rect x="1" y="0.5" width="2.6" height="15.5" fill="#f0f0f0" stroke="#909090" stroke-width="0.8"/>
<path d="M3.8 2Q7 1 10 2.5L16.5 3.5Q15.5 7 15 9L10 9.5Q7 8 3.8 9Z" fill="#f4f4f4" stroke="#a0a0a0" stroke-width="0.8"/><path d="M10 2.5V9.5" stroke="#d8d8d8" stroke-width="0.6"/></svg>
<div class="m" style="left:958px;top:810px">16:37</div>
<div class="m" style="left:946px;top:826px">2023/9/22</div>
<svg style="left:1005px;top:818px" width="16" height="13" viewBox="0 0 16 13">
<defs><linearGradient id="mb" x1="0" y1="0" x2="1" y2="1"><stop offset="0" stop-color="#1850b8"/><stop offset="1" stop-color="#58a8f0"/></linearGradient></defs>
<rect x="0.5" y="0.5" width="15" height="12" fill="url(#mb)" stroke="#a0b8d0" stroke-width="0.6"/><rect x="1" y="9" width="14" height="3" fill="#202020"/>
<circle cx="3" cy="10.2" r="1.6" fill="#f0a020"/><circle cx="2.5" cy="9.6" r="0.7" fill="#e03020"/><circle cx="3.6" cy="10.8" r="0.7" fill="#3090e0"/></svg>
<div class="a" style="left:1px;top:843px;width:1024px;height:2px;background:#dad9d3"></div>
<div class="a" style="left:1px;top:845px;width:1024px;height:29px;background:#f0f0f0"></div>
<div class="u" style="left:5px;top:851px;font-size:12px">状态: 正在运行</div>
<div class="a" style="left:180px;top:847px;width:1px;height:22px;background:#888"></div>
<svg style="left:948px;top:850px" width="20" height="17" viewBox="0 0 20 17">
<defs><linearGradient id="kb" x1="0" y1="0" x2="0" y2="1"><stop offset="0" stop-color="#606870"/><stop offset="1" stop-color="#202830"/></linearGradient></defs>
<rect x="0.5" y="0.5" width="19" height="16" fill="#f4f4f4" stroke="#8c8c8c"/><rect x="0.5" y="0.5" width="19" height="2" fill="#9a9a9a"/>
<rect x="3.5" y="4.5" width="13" height="9" fill="#c4ccd4" stroke="#9aa2aa" stroke-width="0.8"/>
<path d="M5 6.8h10" stroke="#eef" stroke-width="1" stroke-dasharray="1.4 0.8"/><path d="M5 9h10" stroke="#fff" stroke-width="0.8"/>
<rect x="3.8" y="10.5" width="12.4" height="3" fill="url(#kb)"/><path d="M18 1.5V4" stroke="#ddd" stroke-width="0.8"/></svg>
<svg style="left:975px;top:849px" width="13" height="20" viewBox="0 0 13 20">
<defs><linearGradient id="ms" x1="0" y1="0" x2="1" y2="0"><stop offset="0" stop-color="#808080"/><stop offset="0.5" stop-color="#b4b4b4"/><stop offset="1" stop-color="#707070"/></linearGradient></defs>
<rect x="0.9" y="0.9" width="11.2" height="18.2" rx="5.6" fill="url(#ms)" stroke="#111" stroke-width="1.6"/><path d="M6.5 3V10" stroke="#282828" stroke-width="1.8"/></svg>
<svg style="left:993px;top:850px" width="16" height="18" viewBox="0 0 16 18">
<path d="M4 9V5.2A4 4 0 0 1 12 5.2V9" fill="none" stroke="#e4c050" stroke-width="2.4"/><rect x="0.5" y="8.5" width="15" height="9" fill="#f8d060" stroke="#c8a040" stroke-width="0.8"/><rect x="1" y="9" width="7" height="8" fill="#f6e2a0"/></svg>
<svg style="left:1012px;top:860px" width="10" height="10" viewBox="0 0 10 10"><g fill="#999"><rect x="8" y="0" width="2" height="2"/><rect x="4" y="4" width="2" height="2"/><rect x="8" y="4" width="2" height="2"/><rect x="0" y="8" width="2" height="2"/><rect x="4" y="8" width="2" height="2"/><rect x="8" y="8" width="2" height="2"/></g></svg>
<div class="red" style="left:89px;top:613px;width:184px;height:22px;border-width:1.5px"></div>
<div class="red" style="left:322px;top:145px;width:359px;height:20px;border-width:1.5px"></div>
<div class="red" style="left:3px;top:767px;width:479px;height:43px;border-width:1.5px"></div>
<div class="a" style="left:0;top:0;width:1px;height:874px;background:#1883d7"></div>
<div class="a" style="left:1025px;top:0;width:1px;height:874px;background:#1883d7"></div>
<div class="a" style="left:0;top:873px;width:1026px;height:1px;background:#1883d7"></div>
<svg width="0" height="0" style="position:absolute">
<defs>
<linearGradient id="fg" x1="0" x2="1"><stop offset="0" stop-color="#f6e7a0"/><stop offset="1" stop-color="#e2c060"/></linearGradient>
<symbol id="reg" viewBox="0 0 32 32">
<defs><pattern id="dz" width="2" height="2" patternUnits="userSpaceOnUse"><rect width="2" height="2" fill="#00f0f0"/><rect width="1" height="1" fill="#fff"/><rect x="1" y="1" width="1" height="1" fill="#fff"/></pattern></defs>
<path d="M0 16L6 10H22V26L16 32H0Z" fill="#000"/>
<path d="M1.2 15.8L6.4 10.8H21L15.8 15.8Z" fill="url(#dz)"/><path d="M6.5 15.8L11.5 10.8M11.5 15.8L16.5 10.8M3.5 13.3H18.5" stroke="#008080" stroke-width="0.8"/>
<path d="M16.8 16.2L21.2 11.8V25.6L16.8 30.4Z" fill="#008080"/><path d="M16.8 21.5L21.2 17M16.8 26.5L21.2 22" stroke="#000" stroke-width="0.8"/><path d="M18.5 16V19M18.5 21V24M18.5 26V29" stroke="#20c0c0" stroke-width="0.7"/>
<rect x="0.8" y="16.8" width="4.4" height="4.4" fill="url(#dz)"/><path d="M5.2 16.8V21.200000000000003H0.8" fill="none" stroke="#008080" stroke-width="0.8"/><rect x="6.0" y="16.8" width="4.4" height="4.4" fill="#008080"/><path d="M6.6 17.400000000000002H9.8L9.8 20.6Z" fill="url(#dz)"/><rect x="11.2" y="16.8" width="4.4" height="4.4" fill="#008080"/><path d="M11.799999999999999 17.400000000000002H15.0L15.0 20.6Z" fill="url(#dz)"/><rect x="0.8" y="22.0" width="4.4" height="4.4" fill="url(#dz)"/><path d="M5.2 22.0V26.4H0.8" fill="none" stroke="#008080" stroke-width="0.8"/><rect x="6.0" y="22.0" width="4.4" height="4.4" fill="url(#dz)"/><path d="M10.4 22.0V26.4H6.0" fill="none" stroke="#008080" stroke-width="0.8"/><rect x="11.2" y="22.0" width="4.4" height="4.4" fill="#008080"/><path d="M11.799999999999999 22.6H15.0L15.0 25.8Z" fill="url(#dz)"/><rect x="0.8" y="27.2" width="4.4" height="4.4" fill="url(#dz)"/><path d="M5.2 27.2V31.6H0.8" fill="none" stroke="#008080" stroke-width="0.8"/><rect x="6.0" y="27.2" width="4.4" height="4.4" fill="url(#dz)"/><path d="M10.4 27.2V31.6H6.0" fill="none" stroke="#008080" stroke-width="0.8"/><rect x="11.2" y="27.2" width="4.4" height="4.4" fill="url(#dz)"/><path d="M15.6 27.2V31.6H11.2" fill="none" stroke="#008080" stroke-width="0.8"/>
<path d="M18.6 1.8L22 5.2L18.6 8.8L15.2 5.2Z" fill="#008080" stroke="#000" stroke-width="0.8"/><path d="M18.6 2.4L21.2 5.2L18.6 6.6L16 5.2Z" fill="url(#dz)"/>
<path d="M27.6 3.2L31.6 6.4L27.6 9.6L23.6 6.4Z" fill="#008080" stroke="#000" stroke-width="0.8"/><path d="M27.2 3.6L30.2 6.3L27.2 8.2L24.4 6.4Z" fill="url(#dz)"/>
<path d="M24 12.2L27.6 15.4L24 18.6L20.4 15.4Z" fill="#008080" stroke="#000" stroke-width="0.8"/><path d="M23.6 12.8L26.4 15.3L23.6 17.2L21.2 15.4Z" fill="url(#dz)"/>
</symbol>
<symbol id="fold" viewBox="0 0 16 16">
<linearGradient id="fl" x1="0" y1="0" x2="0.6" y2="1"><stop offset="0" stop-color="#f8eeb0"/><stop offset="1" stop-color="#e4c868"/></linearGradient>
<linearGradient id="fr" x1="0" y1="0" x2="0.5" y2="1"><stop offset="0" stop-color="#f6eaa8"/><stop offset="1" stop-color="#dcbc58"/></linearGradient>
<path d="M1.3 0.8Q1.3 0.4 1.8 0.4H7.5V15.2H1.3Z" fill="url(#fl)" stroke="#e8d490" stroke-width="0.5"/>
<path d="M7.2 0.6L12.6 1.2Q13.2 1.3 13.2 1.9V15.2H7.2Z" fill="url(#fr)" stroke="#e0c878" stroke-width="0.5"/>
<path d="M7.4 1V15" stroke="#c8a848" stroke-width="0.9" opacity="0.8"/>
<path d="M13 5.5H14Q14.3 5.6 14.3 6V14.6H13Z" fill="#e2c464"/>
<path d="M3.2 1.6L4.6 1.8L5.4 8.4L4.4 8Z" fill="#fffcf0" opacity="0.9"/>
<path d="M12.6 8.5V10.3" stroke="#f4f4f4" stroke-width="1"/><path d="M12.6 10.3V12.6" stroke="#2a9ae0" stroke-width="1"/>
<path d="M4.2 15H7.3V16H4.2Z" fill="#dcc060"/>
</symbol>
<symbol id="page" viewBox="0 0 16 17">
<path d="M0.5 1.5H12.5L15.5 4.5V16.5Q13.5 15 11.5 14.8Q9 14.6 7 15.6Q5 16 3.5 14.2L0.5 13.5Z" fill="#f6f6f6" stroke="#a8a8a8" stroke-width="0.9"/>
<path d="M12.5 1.5V4.5H15.5" fill="#fff" stroke="#c0c0c0" stroke-width="0.7"/>
</symbol>
<symbol id="ab" viewBox="0 0 16 17">
<use href="#page"/>
<text x="1.8" y="11.3" font-family="Liberation Sans" font-weight="bold" font-size="9.6" fill="#e0400c" stroke="#e0400c" stroke-width="0.35">ab</text>
</symbol>
<symbol id="bin" viewBox="0 0 16 17">
<use href="#page"/>
<g fill="none" stroke="#1540e0" stroke-width="1.4">
<rect x="2.7" y="4.7" width="3.6" height="2.6" rx="1.3"/><rect x="9.7" y="9.7" width="3.6" height="2.6" rx="1.3"/></g>
<g fill="#1540e0"><rect x="8" y="4" width="1.6" height="4"/><rect x="11.4" y="4" width="1.6" height="4"/><rect x="7.5" y="4" width="2" height="0.9"/><rect x="10.9" y="4" width="2" height="0.9"/>
<rect x="3" y="9" width="1.6" height="4"/><rect x="6" y="9" width="1.6" height="4"/><rect x="2.5" y="9" width="2" height="0.9"/><rect x="5.5" y="9" width="2" height="0.9"/></g>
</symbol>
</defs></svg>
</body></html>
